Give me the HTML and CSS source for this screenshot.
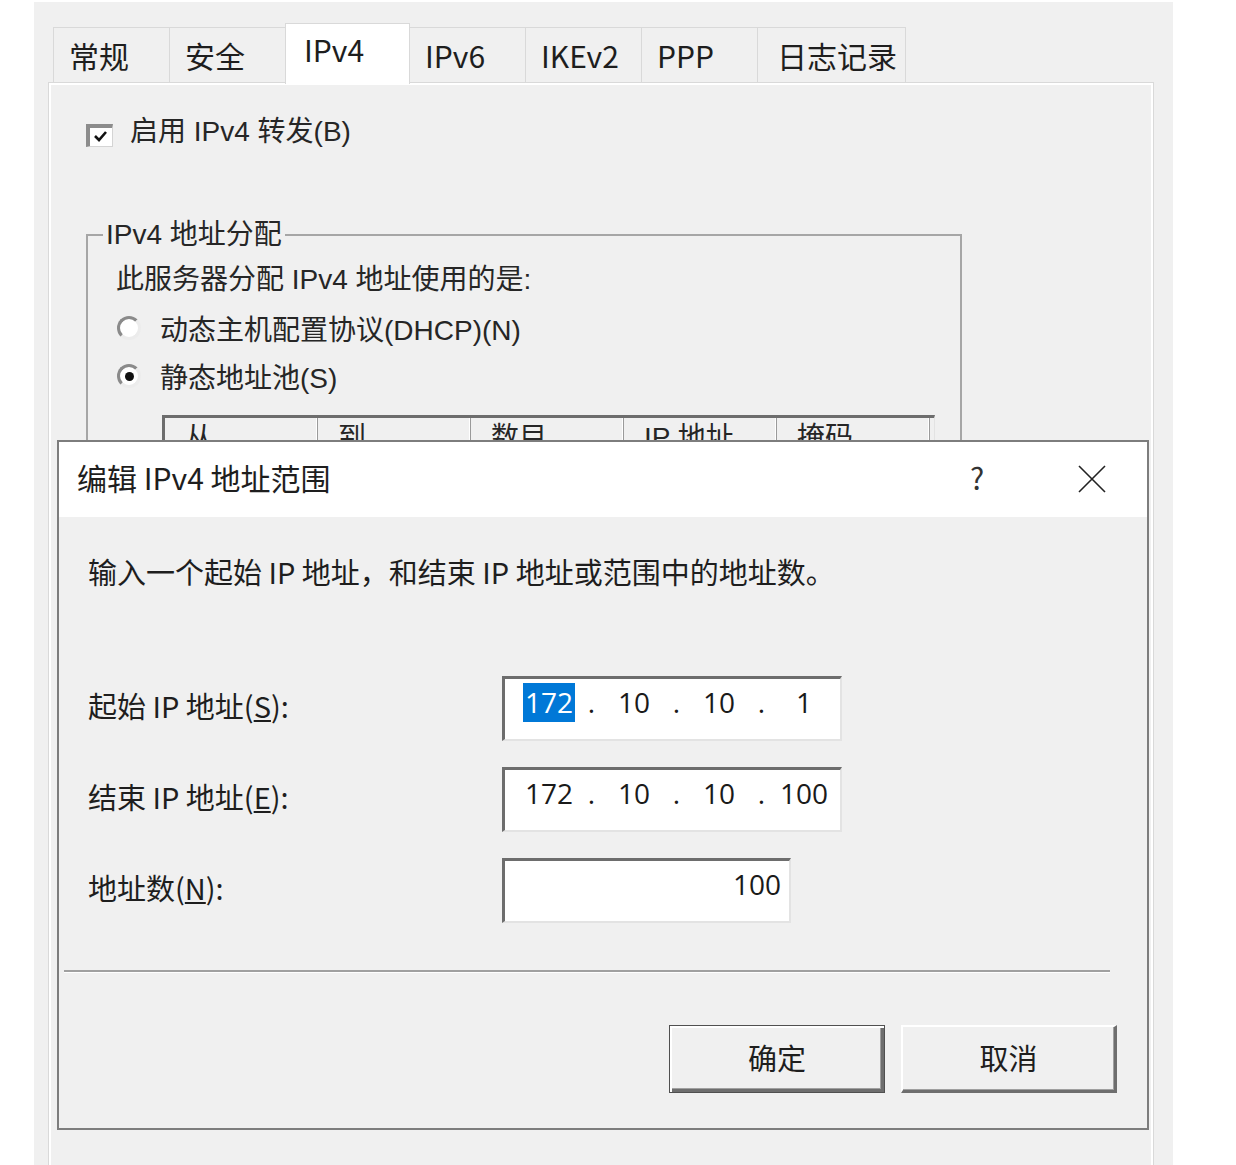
FILE: index.html
```html
<!DOCTYPE html>
<html lang="zh-CN">
<head>
    <meta charset="UTF-8">
    <meta name="viewport" content="width=device-width, initial-scale=1.0">
    <title>IPv4 地址范围</title>
    <link rel="stylesheet" href="styles.css">
</head>
<body>
    <div class="window">
        <!-- TABS -->
        <div class="tabs">
            <div class="tab">常规</div>
            <div class="tab">安全</div>
            <div class="tab active">IPv4</div>
            <div class="tab">IPv6</div>
            <div class="tab">IKEv2</div>
            <div class="tab">PPP</div>
            <div class="tab wide">日志记录</div>
        </div>

        <!-- IPV4 PAGE -->
        <div class="panel">
            <div class="check-row">
                <span class="checkbox">
                    <svg width="16" height="14" viewBox="0 0 16 14"><polyline points="2,6 6,10 13,2" fill="none" stroke="#111" stroke-width="2.6"/></svg>
                </span>
                <span>启用 IPv4 转发(B)</span>
            </div>

            <fieldset class="group">
                <legend>IPv4 地址分配</legend>
                <p class="group-note">此服务器分配 IPv4 地址使用的是:</p>
                <div class="radio-row"><span class="radio"></span>动态主机配置协议(DHCP)(N)</div>
                <div class="radio-row"><span class="radio checked"></span>静态地址池(S)</div>
                <div class="pool">
                    <div class="pool-head">
                        <div class="col">从</div>
                        <div class="col">到</div>
                        <div class="col">数目</div>
                        <div class="col">IP 地址</div>
                        <div class="col">掩码</div>
                    </div>
                    <div class="pool-body"></div>
                </div>
            </fieldset>
        </div>

        <!-- EDIT RANGE DIALOG -->
        <div class="dialog">
            <div class="titlebar">
                <span class="title">编辑 IPv4 地址范围</span>
                <span class="help">?</span>
                <span class="close">
                    <svg width="28" height="28" viewBox="0 0 28 28"><path d="M1 1 L27 27 M27 1 L1 27" stroke="#222" stroke-width="1.6"/></svg>
                </span>
            </div>
            <div class="dialog-body">
                <p class="intro">输入一个起始 IP 地址，和结束 IP 地址或范围中的地址数。</p>
                <div class="form">
                    <label class="field-label">起始 IP 地址(<u>S</u>):</label>
                    <div class="field ip-field">
                        <span class="seg"><span class="selected">172</span></span><span class="dot">.</span>
                        <span class="seg">10</span><span class="dot">.</span>
                        <span class="seg">10</span><span class="dot">.</span>
                        <span class="seg">1</span>
                    </div>
                    <label class="field-label">结束 IP 地址(<u>E</u>):</label>
                    <div class="field ip-field">
                        <span class="seg">172</span><span class="dot">.</span>
                        <span class="seg">10</span><span class="dot">.</span>
                        <span class="seg">10</span><span class="dot">.</span>
                        <span class="seg">100</span>
                    </div>
                    <label class="field-label">地址数(<u>N</u>):</label>
                    <div class="field num-field">100</div>
                </div>
                <div class="separator"></div>
                <div class="buttons">
                    <button class="btn default">确定</button>
                    <button class="btn">取消</button>
                </div>
            </div>
        </div>
    </div>
</body>
</html>
```

FILE: styles.css
```css
body {
    margin: 0;
    background-color: #ffffff;
    overflow: hidden;
    font-family: "Noto Sans CJK SC", sans-serif;
    color: #1e1e1e;
}
.window {
    position: relative;
    box-sizing: border-box;
    width: 1139px;
    height: 1163px;
    margin: 2px 0 0 34px;
    padding: 0 19px 0 14px;
    background-color: #f0f0f0;
    overflow: hidden;
}

/* tabs */
.tabs {
    display: flex;
    align-items: flex-end;
    height: 80px;
    margin-left: 5px;
}
.tab {
    box-sizing: border-box;
    min-width: 117px;
    height: 55px;
    padding: 0 15px;
    margin-right: -1px;
    font-size: 30px;
    line-height: 54px;
    border: 1px solid #d9d9d9;
    border-bottom: none;
    background-color: #f0f0f0;
}
.tab.active {
    position: relative;
    z-index: 1;
    min-width: 125px;
    height: 61px;
    margin-bottom: -2px;
    padding-left: 18px;
    line-height: 50px;
    background-color: #ffffff;
}
.tab.wide {
    min-width: 148px;
    padding: 0 8px 0 19px;
}

/* page */
.panel {
    box-sizing: border-box;
    height: 1100px;
    padding: 32px 0 0 37px;
    border: 1px solid #d9d9d9;
    box-shadow: inset 0 0 0 2px #ffffff;
    font-family: "Liberation Sans", "Noto Sans CJK SC", sans-serif;
    font-size: 28px;
    color: #262626;
}
.check-row {
    display: flex;
    align-items: flex-start;
    gap: 17px;
    line-height: 34px;
}
.checkbox {
    box-sizing: border-box;
    display: flex;
    align-items: center;
    justify-content: center;
    width: 27px;
    height: 23px;
    margin-top: 9px;
    background-color: #ffffff;
    border-style: solid;
    border-width: 4px 1px 1px 4px;
    border-color: #8c8c8c #d4d4d4 #d4d4d4 #8c8c8c;
}
.group {
    box-sizing: border-box;
    width: 876px;
    margin: 69px 0 0 0;
    padding: 0 0 24px 28px;
    border: 2px solid #a6a6a6;
}
.group legend {
    margin-left: -13px;
    padding: 0 3px;
    line-height: 34px;
}
.group-note {
    margin: 11px 0 0;
    line-height: 34px;
}
.radio-row {
    display: flex;
    align-items: center;
    gap: 19px;
    height: 34px;
    margin-top: 14px;
}
.radio {
    box-sizing: border-box;
    display: flex;
    align-items: center;
    justify-content: center;
    width: 24px;
    height: 24px;
    margin-left: 1px;
    border-radius: 50%;
    background-color: #ffffff;
    border: 3px solid;
    border-color: #8a8a8a #ececec #ececec #8a8a8a;
}
.radio.checked::after {
    content: "";
    width: 9px;
    height: 9px;
    border-radius: 50%;
    background-color: #111;
}
.pool {
    width: 769px;
    margin: 22px 0 0 46px;
    border-style: solid;
    border-width: 3px 1px 1px 3px;
    border-color: #6d6d6d #e3e3e3 #e3e3e3 #6d6d6d;
}
.pool-head {
    display: flex;
    height: 42px;
}
.pool-head .col {
    box-sizing: border-box;
    width: 153px;
    padding-left: 20px;
    line-height: 40px;
    border-right: 1px solid #9a9a9a;
    box-shadow: inset -1px 0 #ffffff;
}
.pool-body {
    height: 500px;
    background-color: #ffffff;
}

/* dialog */
.dialog {
    position: absolute;
    z-index: 2;
    left: 23px;
    top: 438px;
    box-sizing: border-box;
    width: 1092px;
    height: 690px;
    border: 2px solid #7d7d7d;
    background-color: #f0f0f0;
}
.titlebar {
    display: flex;
    align-items: center;
    box-sizing: border-box;
    height: 75px;
    padding: 0 0 5px 18px;
    background-color: #ffffff;
    font-size: 30px;
}
.help {
    width: 40px;
    margin-left: auto;
    text-align: center;
    color: #333;
}
.close {
    display: flex;
    margin: 4px 41px 0 81px;
}
.dialog-body {
    padding: 34px 30px 0 29px;
    font-size: 29px;
}
.intro {
    margin: 0;
    line-height: 40px;
}
.form {
    display: grid;
    grid-template-columns: 414px auto;
    row-gap: 26px;
    margin-top: 85px;
}
.field-label {
    align-self: center;
    padding-bottom: 7px;
    line-height: 40px;
}
.field {
    box-sizing: border-box;
    height: 65px;
    background-color: #ffffff;
    border-style: solid;
    border-width: 3px 2px 2px 3px;
    border-color: #6d6d6d #e3e3e3 #e3e3e3 #6d6d6d;
    font-family: "Open Sans", "Noto Sans", sans-serif;
    font-size: 28px;
    line-height: 39px;
    color: #1a1a1a;
}
.ip-field {
    display: flex;
    width: 340px;
    padding: 4px 0 0 9px;
}
.seg {
    width: 70px;
    text-align: center;
}
.dot {
    width: 15px;
    text-align: center;
}
.selected {
    display: inline-block;
    padding: 0 2px;
    background-color: #0078d7;
    color: #ffffff;
}
.num-field {
    width: 289px;
    padding: 4px 8px 0 0;
    text-align: right;
}
.separator {
    width: 1046px;
    margin: 47px 0 0 -24px;
    border-top: 2px solid #a0a0a0;
    border-bottom: 1px solid #ffffff;
}
.buttons {
    display: flex;
    justify-content: flex-end;
    gap: 16px;
    margin-top: 52px;
}
.btn {
    box-sizing: border-box;
    width: 216px;
    height: 68px;
    padding: 0 0 4px;
    font-family: "Noto Sans CJK SC", sans-serif;
    font-size: 29px;
    color: #1e1e1e;
    background-color: #f0f0f0;
    border-style: solid;
    border-width: 2px 3px 3px 2px;
    border-color: #ffffff #6e6e6e #6e6e6e #ffffff;
    box-shadow: inset -1px -1px #a0a0a0;
}
.btn.default {
    border: 1px solid #505050;
    box-shadow: inset 2px 2px #ffffff, inset -3px -3px #6e6e6e, inset -4px -4px #a0a0a0;
}
```
